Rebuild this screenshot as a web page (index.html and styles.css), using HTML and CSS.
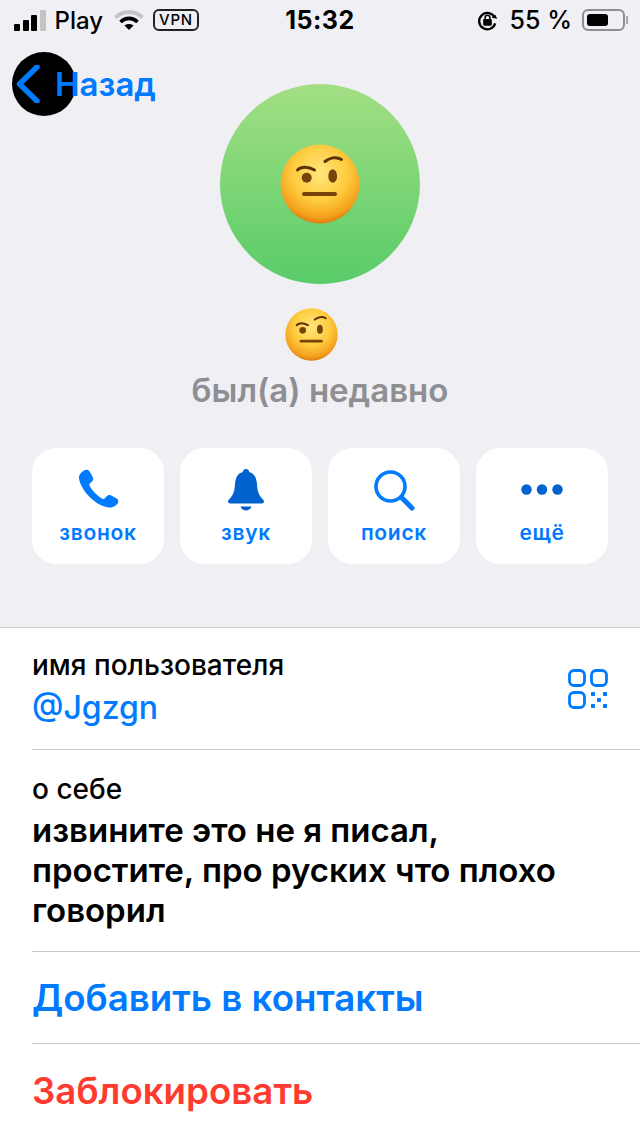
FILE: index.html
```html
<!DOCTYPE html>
<html lang="en">

<head>
  <meta charset="UTF-8">
  <meta name="viewport" content="width=device-width, initial-scale=1.0">
  <title>Профиль</title>
  <link rel="stylesheet" href="styles.css">
</head>

<body>
  <svg class="defs" width="0" height="0">
    <defs>
      <radialGradient id="face" cx="50%" cy="36%" r="64%">
        <stop offset="0" stop-color="#ffe67c" />
        <stop offset="0.55" stop-color="#fecb3e" />
        <stop offset="0.88" stop-color="#f5a01c" />
        <stop offset="1" stop-color="#dc7c10" />
      </radialGradient>
      <symbol id="emoji" viewBox="0 0 80 80">
        <circle cx="40" cy="40" r="39.500" fill="url(#face)" />
        <path d="M17.500 26c4-4 11-3.500 17 0" fill="none" stroke="#5c3209" stroke-width="3" stroke-linecap="round" />
        <path d="M45 17.500c4-3.500 11-5.500 16.500-2" fill="none" stroke="#5c3209" stroke-width="3" stroke-linecap="round" />
        <circle cx="26.700" cy="33.700" r="5" fill="#744409" />
        <ellipse cx="52.700" cy="32" rx="4.400" ry="6.800" fill="#744409" />
        <rect x="22" y="48" width="35" height="4" rx="2" fill="#744409" />
      </symbol>
    </defs>
  </svg>

  <header class="status-bar">
    <div class="status-left">
      <span class="signal"><i></i><i></i><i></i><i class="off"></i></span>
      <span>Play</span>
      <svg class="wifi" viewBox="0 0 30 22" width="30" height="22">
        <path d="M1.500 8.500C9 1 21 1 28.500 8.500" fill="none" stroke="#c4c4c6" stroke-width="4" />
        <path d="M6.500 13c5-4.800 12-4.800 17 0" fill="none" stroke="#000" stroke-width="3.600" />
        <path d="M10.500 16.500c2.700-2 6.300-2 9 0L15 21z" fill="#000" />
      </svg>
      <span class="vpn">VPN</span>
    </div>
    <div class="status-time">15:32</div>
    <div class="status-right">
      <svg class="lock" viewBox="0 0 24 24" width="23" height="23">
        <path d="M19.500 9A8.500 8.500 0 1 0 20 15" fill="none" stroke="#000" stroke-width="2.400" />
        <path d="M16.500 9.500h6l-3-4z" fill="#000" transform="rotate(10 19 8)" />
        <rect x="7.500" y="10.500" width="9" height="7" rx="1.200" fill="#000" />
        <path d="M9.500 11V9a2.500 2.500 0 0 1 5 0v2" fill="none" stroke="#000" stroke-width="1.600" />
      </svg>
      <span>55 %</span>
      <span class="battery"><i></i></span>
    </div>
  </header>

  <a class="back">
    <svg class="back-icon" viewBox="0 0 26 38" width="26" height="38">
      <path d="M22 2 4.500 19 22 36" fill="none" stroke="#007aff" stroke-width="5.500" stroke-linecap="round" stroke-linejoin="round" />
    </svg>
    <span>Назад</span>
  </a>

  <main>
    <section class="profile">
      <div class="avatar">
        <svg width="80" height="80"><use href="#emoji" /></svg>
      </div>
      <svg class="name" width="53" height="53"><use href="#emoji" /></svg>
      <p class="last-seen">был(а) недавно</p>
    </section>

    <section class="actions">
      <div class="action">
        <svg viewBox="0 0 44 44" width="44" height="44">
          <path d="M8 2.500c2-1.300 4.500-1 5.500.8l3.300 6c.8 1.500.4 3.200-.8 4.300l-2.200 2c-.6.500-.7 1.200-.3 1.900 1.600 3 3.600 5.700 6 8 2.300 2.300 4.600 4 7 5.300.7.400 1.400.3 2-.3l2.500-2.500c1.100-1.100 2.800-1.400 4.200-.6l5.500 3.200c1.800 1 2.200 3.400.9 5-2.200 2.800-5.500 4.400-9 3.900-6.500-.9-13-4.500-18.700-10.200C8 23.400 3.800 16.300 3 10.500 2.500 7.400 5 4.400 8 2.500z" fill="#007aff" />
        </svg>
        <span>звонок</span>
      </div>
      <div class="action">
        <svg viewBox="0 0 44 44" width="44" height="44">
          <path d="M22 1c-1.800 0-3 1.200-3.200 3C13.500 5.400 11.500 10 11 16c-.4 6-1 10.500-5.500 15-1.200 1.300-1.500 1.800-1.500 2.600 0 1.200 1 1.900 2.200 1.900h31.600c1.200 0 2.200-.7 2.200-1.900 0-.8-.3-1.300-1.500-2.600-4.500-4.500-5.100-9-5.500-15-.5-6-2.500-10.600-7.800-12C25 2.200 23.800 1 22 1z" fill="#0062cc" />
          <path d="M16.500 38.500h11c-.8 2.500-2.900 4-5.500 4s-4.700-1.500-5.500-4z" fill="#0062cc" />
        </svg>
        <span>звук</span>
      </div>
      <div class="action">
        <svg viewBox="0 0 44 44" width="44" height="44">
          <circle cx="18.500" cy="18.500" r="14.500" fill="none" stroke="#007aff" stroke-width="3.600" />
          <path d="M29.500 29.500 40 40" fill="none" stroke="#007aff" stroke-width="5" stroke-linecap="round" />
        </svg>
        <span>поиск</span>
      </div>
      <div class="action">
        <svg viewBox="0 0 44 44" width="44" height="44">
          <circle cx="6.500" cy="21.500" r="5.200" fill="#0062cc" />
          <circle cx="22" cy="21.500" r="5.200" fill="#0062cc" />
          <circle cx="37.500" cy="21.500" r="5.200" fill="#0062cc" />
        </svg>
        <span>ещё</span>
      </div>
    </section>

    <section class="info">
      <div class="row row-user">
        <div>
          <p class="label">имя пользователя</p>
          <p class="value link">@Jgzgn</p>
        </div>
        <svg class="qr" viewBox="0 0 40 40" width="40" height="40" fill="none" stroke="#007aff" stroke-width="2.800">
          <rect x="1.500" y="1.500" width="15" height="15" rx="4.500" />
          <rect x="23.500" y="1.500" width="15" height="15" rx="4.500" />
          <rect x="1.500" y="23.500" width="15" height="15" rx="4.500" />
          <g fill="#007aff" stroke="none">
            <rect x="23" y="23" width="4" height="4" rx="0.800" />
            <rect x="35" y="23" width="4" height="4" rx="0.800" />
            <rect x="29" y="29" width="4" height="4" rx="0.800" />
            <rect x="23" y="35" width="4" height="4" rx="0.800" />
            <rect x="35" y="35" width="4" height="4" rx="0.800" />
          </g>
        </svg>
      </div>
      <div class="row row-bio">
        <p class="label">о себе</p>
        <p class="value">извините это не я писал,<br>простите, про руских что плохо<br>говорил</p>
      </div>
      <div class="row row-action link">Добавить в контакты</div>
      <div class="row row-action danger">Заблокировать</div>
    </section>
  </main>
</body>

</html>
```

FILE: styles.css
```css
* {
  margin: 0;
  padding: 0;
  box-sizing: border-box;
}

body {
  position: relative;
  width: 640px;
  height: 1136px;
  overflow: hidden;
  background: #efeff4;
  color: #000;
  font-family: Inter, "Noto Sans", sans-serif;
}

.defs {
  position: absolute;
}

/* Barra de estado */
.status-bar {
  display: grid;
  grid-template-columns: 1fr auto 1fr;
  align-items: center;
  height: 40px;
  font-size: 25px;
  font-weight: 500;
}

.status-left {
  display: flex;
  align-items: center;
  gap: 9px;
  padding-left: 14px;
  font-size: 24px;
}

.signal {
  display: flex;
  align-items: flex-end;
  gap: 2.500px;
  height: 22px;
}

.signal i {
  width: 6px;
  border-radius: 1px;
  background: #000;
}

.signal i:nth-child(1) { height: 7px; }
.signal i:nth-child(2) { height: 11px; }
.signal i:nth-child(3) { height: 16px; }
.signal i:nth-child(4) { height: 21px; }
.signal i.off { background: #c4c4c6; }

.wifi {
  margin-left: 2px;
}

.vpn {
  border: 2px solid #222;
  border-radius: 6px;
  padding: 0 4px;
  height: 22px;
  line-height: 18px;
  font-size: 15px;
  letter-spacing: 0.8px;
}

.status-time {
  font-weight: 700;
  font-size: 25px;
  letter-spacing: 0.5px;
}

.status-right {
  display: flex;
  align-items: center;
  justify-content: flex-end;
  gap: 10px;
  padding-right: 15px;
}

.lock {
  margin-right: 1px;
}

.battery {
  position: relative;
  display: block;
  width: 43px;
  height: 22px;
  padding: 3px;
  border: 2px solid #8e8e93;
  border-radius: 6px;
}

.battery::after {
  content: "";
  position: absolute;
  top: 5px;
  right: -5px;
  width: 2px;
  height: 8px;
  background: #a8a8ac;
}

.battery i {
  display: block;
  width: 21px;
  height: 100%;
  border-radius: 3px;
  background: #000;
}

/* Botón de volver, encima del contenido */
.back {
  position: absolute;
  top: 52px;
  left: 12px;
  width: 64px;
  height: 64px;
  border-radius: 50%;
  background: #000;
  color: #007aff;
  font-size: 33px;
  font-weight: 600;
}

.back-icon {
  position: absolute;
  top: 13px;
  left: 3px;
}

.back span {
  position: absolute;
  top: 12px;
  left: 43px;
}

/* Cabecera del perfil */
.profile {
  display: flex;
  flex-direction: column;
  align-items: center;
  padding-top: 44px;
}

.avatar {
  display: flex;
  align-items: center;
  justify-content: center;
  width: 200px;
  height: 200px;
  border-radius: 50%;
  background: linear-gradient(#a3df84, #58cc68);
}

.name {
  display: block;
  margin-top: 24px;
  margin-right: 18px;
}

.last-seen {
  margin-top: 11px;
  font-size: 33px;
  line-height: 36px;
  font-weight: 600;
  color: #8e8e93;
}

/* Botones de acción */
.actions {
  display: flex;
  gap: 16px;
  padding: 40px 32px 63px;
}

.action {
  display: flex;
  flex-direction: column;
  align-items: center;
  width: 132px;
  height: 116px;
  padding-top: 20px;
  border-radius: 24px;
  background: #fff;
  color: #007aff;
  font-size: 21px;
  font-weight: 600;
  letter-spacing: 0.7px;
}

.action span {
  margin-top: 7px;
  line-height: 28px;
}

/* Lista de información */
.info {
  height: 509px;
  background: #fff;
  border-top: 1px solid #c8c7cc;
}

.row {
  margin-left: 32px;
  border-bottom: 1px solid #c8c7cc;
}

.row:last-child {
  border-bottom: 0;
}

.row-user {
  display: flex;
  align-items: center;
  justify-content: space-between;
  height: 122px;
  padding-right: 32px;
}

.row-bio {
  height: 202px;
  padding-top: 24px;
}

.row-action {
  display: flex;
  align-items: center;
  height: 92px;
  font-size: 36.700px;
  font-weight: 600;
}

.label {
  font-size: 28px;
  line-height: 30px;
  font-weight: 500;
}

.value {
  font-size: 33px;
  line-height: 40px;
  font-weight: 600;
  margin-top: 6px;
}

.row-user .value {
  font-size: 32px;
  font-weight: 500;
  margin-top: 8px;
}

.link {
  color: #007aff;
}

.danger {
  color: #ff3b30;
}
```
